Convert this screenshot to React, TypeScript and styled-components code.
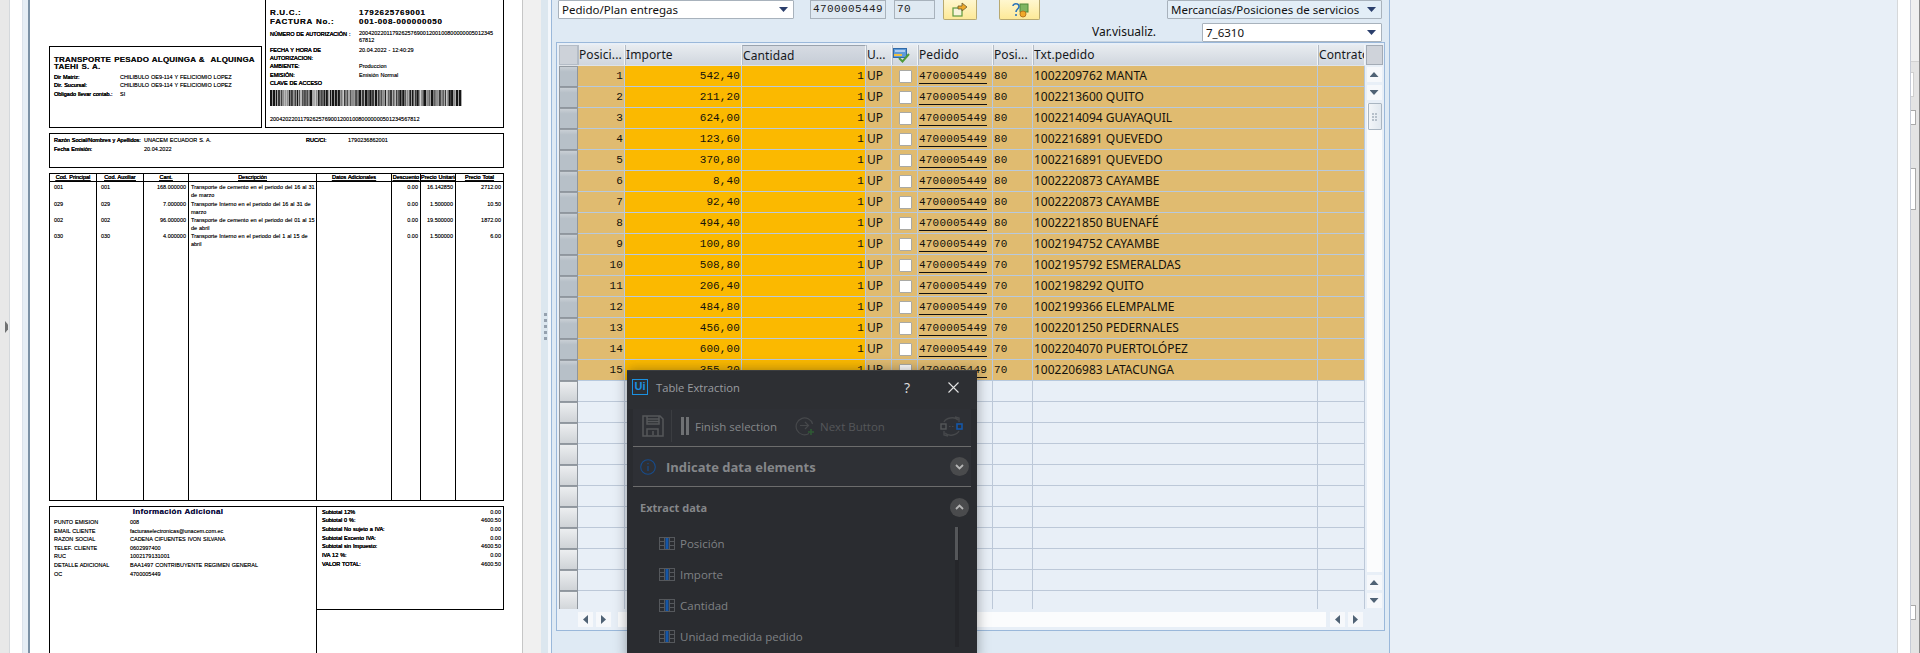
import React, { FC } from 'react';
import styled, { createGlobalStyle } from 'styled-components';

const GlobalStyle = createGlobalStyle`
  html, body { margin: 0; padding: 0; background: #fff; overflow: hidden; }
  * { box-sizing: border-box; }
`;

const Screen = styled.div`
  position: relative;
  display: flex;
  width: 1920px;
  height: 653px;
  overflow: hidden;
  font-family: 'Noto Sans', sans-serif;
`;

/* ---------- left viewer chrome ---------- */
const LeftRail = styled.div`
  width: 10px;
  background: #e8e8e8;
  border-right: 1px solid #d4d8dc;
  display: flex;
  align-items: center;
  justify-content: flex-end;
  padding: 0 1px 0 0;
`;
const RailGrip = styled.div`
  width: 3px;
  height: 12px;
  margin-top: 1px;
  background: #6f7172;
  clip-path: polygon(0 0, 100% 30%, 100% 70%, 0 100%);
`;
const ViewerGap = styled.div`
  width: 12px;
  background: #fff;
`;
const ViewerBand = styled.div`
  width: 8px;
  background: #e6eef5;
  border-left: 1px solid #dbe2ea;
  border-right: 2px solid #7c92a6;
`;

/* ---------- invoice ---------- */
const InvoicePage = styled.div`
  width: 493px;
  background: #fff;
  border-right: 1px solid #c6c6c6;
  padding: 0 18px 0 19px;
  color: #111;
  font-family: 'Liberation Sans', Arial, sans-serif;
  font-size: 5.5px;
  word-spacing: 0.4px;
  text-shadow: 0 0 0.6px rgba(0, 0, 0, 0.75);
  display: flex;
  flex-direction: column;

  & > * {
    flex: none;
  }
`;
const InvoiceTop = styled.div`
  display: flex;
  align-items: flex-end;
  gap: 3px;
  height: 128px;
`;
const InvoiceBox = styled.div`
  border: 1px solid #000;
`;
const CompanyBox = styled(InvoiceBox)`
  width: 213px;
  height: 82px;
  padding: 9px 5px 0 4px;
`;
const CompanyName = styled.div`
  font-size: 8px;
  line-height: 7px;
  font-weight: 700;
  letter-spacing: 0.2px;
  word-spacing: 0.6px;
  margin-bottom: 3px;
  white-space: pre;
`;
const PlainRow = styled.div<{ $h: number; $label: number }>`
  display: grid;
  grid-template-columns: ${(p) => p.$label}px 1fr;
  height: ${(p) => p.$h}px;
  line-height: 8px;
  white-space: nowrap;
`;
const KeyText = styled.span`
  text-shadow: 0 0 0.5px #000, 0 0 0.5px #000;
`;
const RucBox = styled(InvoiceBox)`
  width: 239px;
  height: 129px;
  padding: 8px 5px 0 4px;
`;
const RucRow = styled.div`
  display: grid;
  grid-template-columns: 89px 1fr;
  font-size: 8px;
  line-height: 9px;
  font-weight: 700;
  letter-spacing: 0.68px;
  height: 9px;
  white-space: nowrap;
`;
const RucDetails = styled.div`
  margin-top: 4px;
`;
const DetailValue = styled.span`
  line-height: 7.4px;
  white-space: normal;
  word-break: break-all;
  padding-right: 4px;
`;
const BarcodeArt = styled.svg`
  display: block;
  margin: 3px 0 0 0;
`;
const KeyLine = styled.div`
  margin-top: 9px;
  white-space: nowrap;
  line-height: 8px;
`;
const BuyerBox = styled(InvoiceBox)`
  margin-top: 5px;
  height: 35px;
  padding: 2px 0 0 4px;
`;
const BuyerLine = styled.div`
  display: grid;
  grid-template-columns: 90px 162px 42px 1fr;
  height: 9px;
  line-height: 8px;
  white-space: nowrap;
`;
const ItemsTable = styled(InvoiceBox)`
  margin-top: 5px;
  height: 328px;
  display: flex;
`;
const ItemColumn = styled.div<{ $w: number; $last?: boolean }>`
  width: ${(p) => p.$w}px;
  flex: none;
  border-right: ${(p) => (p.$last ? 0 : '1px solid #000')};
`;
const ItemHead = styled.div`
  height: 8px;
  border-bottom: 1px solid #000;
  text-align: center;
  text-decoration: underline;
  text-shadow: 0 0 0.5px #000, 0 0 0.5px #000;
  line-height: 7px;
  white-space: nowrap;
  overflow: hidden;
`;
const ItemCell = styled.div<{ $h: number; $align?: string; $wide?: boolean }>`
  height: ${(p) => p.$h}px;
  line-height: 7.6px;
  padding: ${(p) => (p.$wide ? '0 0 0 2px' : p.$align === 'right' ? '0 2px' : '0 2px 0 4px')};
  text-align: ${(p) => p.$align || 'left'};
`;
const ItemCells = styled.div`
  padding-top: 2px;
`;
const FooterRow = styled.div`
  margin-top: 5px;
  display: flex;
  align-items: flex-start;
`;
const ExtraBox = styled(InvoiceBox)`
  width: 268px;
  height: 160px;
  flex: none;
  padding: 0 0 0 4px;
`;
const ExtraTitle = styled.div`
  font-size: 8px;
  line-height: 9px;
  font-weight: 700;
  text-align: center;
  letter-spacing: 0.3px;
  color: #10104a;
  padding-right: 14px;
`;
const ExtraRows = styled.div`
  margin-top: 2px;
`;
const TotalsBox = styled.div`
  flex: 1;
  height: 104px;
  border: 1px solid #000;
  border-left: 0;
  padding: 1px 2px 0 5px;
`;
const TotalLine = styled.div<{ $h: number }>`
  display: flex;
  justify-content: space-between;
  height: ${(p) => p.$h}px;
  line-height: 8px;
`;

/* ---------- sash between the panes ---------- */
const SashGap = styled.div`
  width: 18px;
  background: #f0f0f0;
`;
const Sash = styled.div`
  width: 7px;
  background: #dce7ef;
  display: flex;
  flex-direction: column;
  align-items: center;
  justify-content: center;
  gap: 3px;
  padding: 0 0 0 2px;
`;
const SashDot = styled.i`
  display: block;
  width: 3px;
  height: 3px;
  background: #95a1ae;
`;
const SashEdge = styled.div`
  width: 3px;
  background: #f3f7fb;
`;

/* ---------- SAP panel ---------- */
const SapPanel = styled.div`
  width: 839px;
  background: #dfeaf4;
  border-left: 1px solid #9ab8da;
  border-right: 1px solid #9ab8da;
  display: flex;
  flex-direction: column;
`;
const FormRow = styled.div`
  display: flex;
  height: 20px;
  padding-left: 6px;
  align-items: flex-start;
`;
const FormRowTwo = styled.div`
  display: flex;
  height: 22px;
  padding-top: 3px;
  padding-left: 538px;
  font-size: 12px;
  color: #111;
`;
const FieldLabel = styled.div`
  width: 112px;
  height: 19px;
  line-height: 18px;
  padding-left: 2px;
  border-bottom: 1px solid #c5d3e1;
`;
const Dropdown = styled.div<{ $w: number; $ml?: number; $dim?: boolean }>`
  width: ${(p) => p.$w}px;
  height: 19px;
  margin-left: ${(p) => p.$ml || 0}px;
  background: ${(p) => (p.$dim ? '#e3eef7' : '#fff')};
  border: 1px solid #a8b2bc;
  border-radius: 1px;
  font-size: 11.5px;
  line-height: 17px;
  color: #111;
  padding: 0 3px;
  display: flex;
  justify-content: space-between;
  align-items: center;
  white-space: nowrap;
`;
const DropArrow = styled.span`
  width: 9px;
  height: 5px;
  margin-right: 2px;
  background: #2b3f6c;
  clip-path: polygon(0 0, 100% 0, 50% 100%);
`;
const ReadField = styled.div<{ $w: number; $ml: number }>`
  width: ${(p) => p.$w}px;
  height: 19px;
  margin-left: ${(p) => p.$ml}px;
  background: #dfe9f2;
  border: 1px solid #a8b2bc;
  font-family: 'Liberation Mono', monospace;
  font-size: 11px;
  letter-spacing: 0.4px;
  line-height: 17px;
  color: #222;
  padding-left: 2px;
  white-space: nowrap;
  overflow: hidden;
`;
const ToolButton = styled.div<{ $w: number; $ml: number }>`
  width: ${(p) => p.$w}px;
  height: 20px;
  margin-left: ${(p) => p.$ml}px;
  border: 1px solid #b8a970;
  border-top: 0;
  border-radius: 0 0 2px 2px;
  background: linear-gradient(#fff7cf, #fde998);
  display: flex;
  align-items: center;
  justify-content: center;
`;
const TableFrame = styled.div`
  margin: 0 0 0 4px;
  width: 829px;
  height: 589px;
  border: 1px solid #9ab8da;
  background: #e8eff7;
  padding: 2px 0 0 2px;
`;
const TableArea = styled.div`
  display: flex;
  height: 564px;
`;
const GridArea = styled.div`
  width: 806px;
  overflow: hidden;
`;
const COLUMNS = '19px 47px 117px 124px 26px 26px 75px 40px 285px 47px';
const HeaderRow = styled.div`
  display: grid;
  grid-template-columns: ${COLUMNS};
  height: 21px;
  padding-bottom: 1px;
  background: #dfe3e8;
`;
const HeadCell = styled.div<{ $sorted?: boolean }>`
  background: ${(p) =>
    p.$sorted
      ? 'linear-gradient(#d6dbe2, #c6cdd7)'
      : 'linear-gradient(#e8ecf0, #d0d6de)'};
  border-right: 1px solid #f2f5f8;
  border-left: 1px solid #b4bcc6;
  border-top: ${(p) => (p.$sorted ? '1px solid #9aa3ad' : '0')};
  font-size: 12px;
  letter-spacing: 0.1px;
  line-height: 20px;
  color: #15181c;
  white-space: nowrap;
  overflow: hidden;
  display: flex;
  align-items: center;
`;
const CornerCell = styled.div`
  background: #cdd2d9;
  border: 1px solid #b4bcc6;
`;
const BodyRow = styled.div`
  display: grid;
  grid-template-columns: ${COLUMNS};
  height: 21px;
`;
const RowSelector = styled.div<{ $filled?: boolean }>`
  border: 1px solid #8f969e;
  border-top: 1px solid #949ba2;
  background: ${(p) =>
    p.$filled
      ? 'linear-gradient(#c9cfd5 0, #b7c0c8 25%, #b7c0c8 100%)'
      : 'linear-gradient(#eceef0, #cfd3d7)'};
`;
const DataCell = styled.div<{ $tone: 'tan' | 'gold' | 'empty'; $mono?: boolean; $right?: boolean }>`
  background: ${(p) =>
    p.$tone === 'tan' ? '#e0bb70' : p.$tone === 'gold' ? '#fbb900' : '#e8eff7'};
  border-right: 1px solid ${(p) => (p.$tone === 'empty' ? '#bcc8d8' : '#b7c9de')};
  border-bottom: 1px solid ${(p) => (p.$tone === 'empty' ? '#bcc8d8' : '#b7c9de')};
  font-family: ${(p) => (p.$mono ? "'Liberation Mono', monospace" : "'Noto Sans', sans-serif")};
  font-size: ${(p) => (p.$mono ? '11px' : '12px')};
  letter-spacing: ${(p) => (p.$mono ? '0.12px' : '0')};
  line-height: 20px;
  color: #14120c;
  text-align: ${(p) => (p.$right ? 'right' : 'left')};
  padding: ${(p) => (p.$right ? '0 1px 0 0' : '0 0 0 1px')};
  white-space: nowrap;
  overflow: hidden;
  display: block;
`;
const CheckCell = styled(DataCell)`
  display: flex;
  align-items: center;
  justify-content: center;
`;
const CheckBox = styled.div`
  width: 13px;
  height: 13px;
  background: #fff;
  border: 1px solid #a9a9a4;
  border-radius: 1px;
`;
const OrderLink = styled.span`
  border-bottom: 1px solid #111;
  padding-bottom: 1px;
  letter-spacing: 0.2px;
`;
const VScroll = styled.div`
  width: 18px;
  display: flex;
  flex-direction: column;
  align-items: center;
  padding-bottom: 1px;
`;
const ScrollCorner = styled.div`
  width: 17px;
  height: 20px;
  background: #cfd3da;
  border: 1px solid #a3abb5;
  margin: 0 0 2px 0;
`;
const ScrollButton = styled.div<{ $mt?: number }>`
  width: 15px;
  height: 15px;
  margin-top: ${(p) => p.$mt || 0}px;
  background: #f6f8fb;
  display: flex;
  align-items: center;
  justify-content: center;
  flex: none;
`;
const ScrollTriangle = styled.i<{ $dir: 'up' | 'down' | 'left' | 'right' }>`
  display: block;
  width: ${(p) => (p.$dir === 'up' || p.$dir === 'down' ? 9 : 5)}px;
  height: ${(p) => (p.$dir === 'up' || p.$dir === 'down' ? 5 : 9)}px;
  background: #4f6275;
  clip-path: ${(p) =>
    p.$dir === 'up'
      ? 'polygon(50% 0, 100% 100%, 0 100%)'
      : p.$dir === 'down'
      ? 'polygon(0 0, 100% 0, 50% 100%)'
      : p.$dir === 'left'
      ? 'polygon(100% 0, 100% 100%, 0 50%)'
      : 'polygon(0 0, 100% 50%, 0 100%)'};
`;
const ScrollTrack = styled.div`
  flex: 1;
  width: 15px;
  margin-top: 3px;
  background: #fbfcfd;
  display: flex;
  flex-direction: column;
`;
const ScrollThumb = styled.div`
  width: 14px;
  height: 27px;
  margin-left: 1px;
  background: linear-gradient(90deg, #f2f5f8, #e1e8ef);
  border: 1px solid #a9b5c1;
  border-radius: 1px;
  display: grid;
  grid-template-columns: repeat(2, 2px);
  grid-auto-rows: 2px;
  gap: 1px;
  justify-content: center;
  align-content: center;
`;
const ThumbDot = styled.i`
  display: block;
  background: #b6c0ca;
`;
const HScroll = styled.div`
  margin: 3px 0 0 19px;
  height: 15px;
  width: 785px;
  display: flex;
  gap: 3px;
`;
const HTrack = styled.div`
  flex: 1;
  background: #fbfcfd;
  margin-left: 4px;
  margin-right: 1px;
`;

/* ---------- right side ---------- */
const EmptyPane = styled.div`
  flex: 1;
  background: #e8eff7;
  border-right: 1px solid #d6d8da;
`;
const WhiteStrip = styled.div`
  width: 12px;
  background: #fff;
  border-right: 1px solid #c6cbd6;
  box-sizing: content-box;
`;
const DockBar = styled.div`
  width: 9px;
  background: #e4e4e4;
  border-right: 1px solid #8a8a8a;
  display: flex;
  flex-direction: column;
  align-items: flex-start;
`;
const DockHead = styled.div`
  height: 62px;
  width: 8px;
  flex: none;
  background: #f0f0f0;
  border-bottom: 1px solid #d2d2d2;
`;
const DockTab = styled.div<{ $w: number; $h: number; $mt: number; $soft?: boolean }>`
  width: ${(p) => p.$w}px;
  height: ${(p) => p.$h}px;
  margin-top: ${(p) => p.$mt}px;
  background: #fff;
  border: 1px solid ${(p) => (p.$soft ? '#cfcfcf' : '#a9a9a9')};
  border-left: 0;
  flex: none;
`;

/* ---------- UiPath popup ---------- */
const Popup = styled.div`
  position: absolute;
  left: 627px;
  top: 370px;
  width: 350px;
  height: 290px;
  background: #2a2c30;
  border-top: 1px solid #3b3d40;
  box-shadow: 0 0 12px rgba(30, 30, 30, 0.4);
  color: #929497;
  font-family: 'Open Sans', 'Noto Sans', sans-serif;
  font-size: 11.5px;
`;
const PopupTitleBar = styled.div`
  height: 38px;
  display: flex;
  align-items: center;
  padding: 0 0 6px 5px;
  background: #2d2f33;
`;
const UiLogo = styled.div`
  width: 16px;
  height: 16px;
  border: 1.5px solid #1b90e0;
  color: #1b90e0;
  font-family: 'Liberation Sans', sans-serif;
  font-size: 11px;
  font-weight: 700;
  line-height: 13px;
  text-align: center;
  margin-right: 8px;
`;
const PopupTitle = styled.div`
  flex: 1;
  font-size: 11.2px;
  color: #9a9ca0;
`;
const PopupHelp = styled.div`
  width: 44px;
  font-size: 14px;
  color: #e0e0e0;
`;
const PopupClose = styled.div`
  width: 29px;
  display: flex;
`;
const PopupToolbar = styled.div`
  margin: 0 6px;
  height: 38px;
  background: #2e3035;
  border-bottom: 1px solid #6c6c6c;
  display: flex;
  align-items: center;
  padding: 0 0 3px 9px;
`;
const ToolDivider = styled.div`
  width: 1px;
  height: 32px;
  margin: 0 9px 0 7px;
  background: #3b3d41;
`;
const PauseBars = styled.div`
  display: flex;
  gap: 2px;
  margin-right: 6px;
`;
const PauseBar = styled.i`
  display: block;
  width: 3px;
  height: 18px;
  background: #6f7174;
`;
const FinishLabel = styled.div`
  color: #85878a;
  width: 100px;
  white-space: nowrap;
`;
const NextLabel = styled.div`
  color: #55575a;
  margin-left: 5px;
  flex: 1;
  white-space: nowrap;
`;
const SwapSlot = styled.div`
  margin-right: 8px;
  display: flex;
`;
const PopupSection = styled.div`
  margin: 0 6px;
  height: 40px;
  border-bottom: 1px solid #6c6c6c;
  display: flex;
  align-items: center;
  padding: 0 2px 0 7px;
  background: #2e3035;
`;
const SectionTitle = styled.div`
  flex: 1;
  margin-left: 10px;
  font-size: 13px;
  font-weight: 700;
  color: #85878a;
`;
const ChevronBall = styled.div`
  width: 19px;
  height: 19px;
  border-radius: 50%;
  background: #4a4b4d;
  display: flex;
  align-items: center;
  justify-content: center;
`;
const ExtractRow = styled.div`
  height: 40px;
  margin: 0 8px 0 13px;
  display: flex;
  align-items: center;
  justify-content: space-between;
  font-size: 11px;
  font-weight: 700;
  color: #85878a;
`;
const ExtractBody = styled.div`
  position: relative;
  padding: 1px 0 0 32px;
`;
const ExtractItem = styled.div`
  height: 31px;
  display: flex;
  align-items: center;
  gap: 5px;
  color: #7f8184;
`;
const ListScrollTrack = styled.div`
  position: absolute;
  right: 18px;
  top: 0;
  width: 4px;
  height: 120px;
  background: #25262a;
`;
const ListScrollThumb = styled.div`
  width: 3px;
  height: 33px;
  background: #55575a;
`;

/* ---------- small drawings ---------- */
const Chevron: FC<{ up?: boolean }> = ({ up }) => (
  <svg width="9" height="6" viewBox="0 0 9 6">
    <path
      d={up ? 'M1 5 L4.5 1.5 L8 5' : 'M1 1 L4.5 4.5 L8 1'}
      fill="none"
      stroke="#b5b5b5"
      strokeWidth="1.8"
    />
  </svg>
);

const ColumnIcon: FC = () => (
  <svg width="16" height="13" viewBox="0 0 16 13" fill="none">
    <rect x="0.5" y="0.5" width="15" height="12" stroke="#55585c" />
    <path d="M0 4.5H6M0 8.5H6M10 4.5H16M10 8.5H16M5.5 0V13M10.5 0V13" stroke="#55585c" />
    <rect x="6.5" y="1" width="3" height="11" fill="#1557a8" />
  </svg>
);

const SaveIcon: FC = () => (
  <svg width="22" height="22" viewBox="0 0 22 22" fill="none" stroke="#55575a" strokeWidth="1.5">
    <path d="M1 1H18L21 4V21H1Z" />
    <path d="M5 1V9H17V1M5 4H17M5 6.5H17" />
    <path d="M5 21V14H16V21M11 16V20" />
  </svg>
);

const NextIcon: FC = () => (
  <svg width="20" height="20" viewBox="0 0 20 20" fill="none" stroke="#46484b" strokeWidth="1.2">
    <path d="M14 17.5A8.4 8.4 0 1 1 17.6 8" />
    <path d="M5 9.5H13M10 6L13.5 9.5L10 13" />
    <path d="M16 13V19M13 16H19" stroke="#2f5a35" strokeWidth="1.6" />
  </svg>
);

const SwapIcon: FC = () => (
  <svg width="23" height="21" viewBox="0 0 23 21" fill="none">
    <path d="M4 6C6 2 14 0 18 4M15 1L19 2V6" stroke="#46484b" strokeWidth="1.4" />
    <path d="M19 15C17 19 9 21 5 17M8 20L4 19V15" stroke="#46484b" strokeWidth="1.4" />
    <rect x="1" y="8" width="5" height="5" stroke="#55575a" strokeWidth="1.4" />
    <rect x="17" y="8" width="5" height="5" stroke="#1557a8" strokeWidth="1.6" />
    <path d="M9 10.5H14" stroke="#46484b" strokeDasharray="1.5 1.5" />
  </svg>
);

const InfoIcon: FC = () => (
  <svg width="16" height="16" viewBox="0 0 16 16" fill="none" stroke="#174c8c">
    <circle cx="8" cy="8" r="7.3" strokeWidth="1.1" />
    <path d="M8 7V12" strokeWidth="1.2" />
    <path d="M8 4V5.3" strokeWidth="1.2" />
  </svg>
);

const CloseIcon: FC = () => (
  <svg width="11" height="11" viewBox="0 0 11 11">
    <path d="M0.5 0.5L10.5 10.5M10.5 0.5L0.5 10.5" stroke="#e4e4e4" strokeWidth="1.1" />
  </svg>
);

const ExportIcon: FC = () => (
  <svg width="16" height="15" viewBox="0 0 16 15" fill="none">
    <rect x="1" y="6" width="9" height="8" fill="#f7f3dc" stroke="#5f9a3d" strokeWidth="1.2" />
    <path d="M6 4H10V1L15 5L10 9V7H6Z" fill="#f0a92a" stroke="#6b5a2e" strokeWidth="0.8" />
  </svg>
);

const HelpIcon: FC = () => (
  <svg width="18" height="16" viewBox="0 0 18 16" fill="none">
    <rect x="9" y="2" width="8" height="8" fill="#7fb561" stroke="#4f8a3a" />
    <circle cx="12" cy="12" r="3" fill="#f0a92a" stroke="#b9781c" />
    <path d="M2 4C2 1 8 1 8 4.5C8 7 5 7 5 10M5 12V14" stroke="#2d74b8" strokeWidth="1.6" />
  </svg>
);

const ColumnCheckIcon: FC = () => (
  <svg width="17" height="15" viewBox="0 0 17 15" fill="none">
    <rect x="0.5" y="0.5" width="13" height="9" fill="#5f9bd8" stroke="#2f69a8" />
    <path d="M2 3H12" stroke="#e4efff" strokeWidth="1.2" />
    <path d="M1 7H9" stroke="#f0c040" strokeWidth="2" />
    <path d="M6 10L9.5 13.5L16 6" stroke="#4f9a3a" strokeWidth="2" />
  </svg>
);

const BARCODE = Array.from({ length: 118 }, (_, i) => {
  const v = (i * 7919 + (i * i) % 97) % 11;
  return { w: v % 3 === 0 ? 2.4 : 1.2, shade: v > 7 ? '#8c8c8c' : v > 3 ? '#3a3a3a' : '#151515', gap: v % 2 === 0 ? 0.5 : 0.2 };
});

const Barcode: FC = () => {
  let x = 0;
  return (
    <BarcodeArt width="192" height="16" viewBox="0 0 192 16">
      {BARCODE.map((b, i) => {
        const rect = <rect key={i} x={x} y="0" width={b.w} height="16" fill={b.shade} />;
        x += (b.w + b.gap) * 1.02;
        return rect;
      })}
    </BarcodeArt>
  );
};

/* ---------- data ---------- */
const ITEM_COLUMNS = [
  { w: 47, head: 'Cod. Principal', cells: ['001', '029', '002', '030'] },
  { w: 47, head: 'Cod. Auxiliar', cells: ['001', '029', '002', '030'] },
  { w: 45, head: 'Cant.', right: true, cells: ['168.000000', '7.000000', '96.000000', '4.000000'] },
  {
    w: 128,
    head: 'Descripción',
    wide: true,
    cells: [
      'Transporte de cemento en el periodo del 16 al 31 de marzo',
      'Transporte Interno en el periodo del 16 al 31 de marzo',
      'Transporte de cemento en el periodo del 01 al 15 de abril',
      'Transporte Interno en el periodo del 1 al 15 de abril',
    ],
  },
  { w: 75, head: 'Datos Adicionales', cells: ['', '', '', ''] },
  { w: 29, head: 'Descuento', right: true, cells: ['0.00', '0.00', '0.00', '0.00'] },
  { w: 35, head: 'Precio Unitario', right: true, cells: ['16.142850', '1.500000', '19.500000', '1.500000'] },
  { w: 47, head: 'Precio Total', right: true, last: true, cells: ['2712.00', '10.50', '1872.00', '6.00'] },
];
const ITEM_HEIGHTS = [17, 16, 16, 16];

const EXTRA_ROWS = [
  ['PUNTO EMISION', '008'],
  ['EMAIL CLIENTE', 'facturaselectronicas@unacem.com.ec'],
  ['RAZON SOCIAL', 'CADENA CIFUENTES IVON SILVANA'],
  ['TELEF. CLIENTE', '0602997400'],
  ['RUC', '1002179131001'],
  ['DETALLE ADICIONAL', 'BAA1497 CONTRIBUYENTE REGIMEN GENERAL'],
  ['OC', '4700005449'],
];
const TOTALS = [
  ['Subtotal 12%', '0.00', 8],
  ['Subtotal 0 %:', '4600.50', 9],
  ['Subtotal No sujeto a IVA:', '0.00', 9],
  ['Subtotal Excento IVA:', '0.00', 8],
  ['Subtotal sin Impuesto:', '4600.50', 9],
  ['IVA 12 %:', '0.00', 9],
  ['VALOR TOTAL:', '4600.50', 9],
] as const;

const ROWS = [
  ['542,40', '80', '1002209762 MANTA'],
  ['211,20', '80', '1002213600 QUITO'],
  ['624,00', '80', '1002214094 GUAYAQUIL'],
  ['123,60', '80', '1002216891 QUEVEDO'],
  ['370,80', '80', '1002216891 QUEVEDO'],
  ['8,40', '80', '1002220873 CAYAMBE'],
  ['92,40', '80', '1002220873 CAYAMBE'],
  ['494,40', '80', '1002221850 BUENAFÉ'],
  ['100,80', '70', '1002194752 CAYAMBE'],
  ['508,80', '70', '1002195792 ESMERALDAS'],
  ['206,40', '70', '1002198292 QUITO'],
  ['484,80', '70', '1002199366 ELEMPALME'],
  ['456,00', '70', '1002201250 PEDERNALES'],
  ['600,00', '70', '1002204070 PUERTOLÓPEZ'],
  ['355,20', '70', '1002206983 LATACUNGA'],
];

const EMPTY_ROWS = Array.from({ length: 11 }, (_, i) => i);
const EMPTY_CELLS = Array.from({ length: 9 }, (_, i) => i);
const LIST_ITEMS = ['Posición', 'Importe', 'Cantidad', 'Unidad medida pedido'];

const Invoice: FC = () => (
  <InvoicePage>
    <InvoiceTop>
      <CompanyBox>
        <CompanyName>{'TRANSPORTE PESADO ALQUINGA &  ALQUINGA\nTAEHI S. A.'}</CompanyName>
        <PlainRow $h={8} $label={66}>
          <KeyText>Dir Matriz:</KeyText>
          <span>CHILIBULO OE9-114 Y FELICIOMIO LOPEZ</span>
        </PlainRow>
        <PlainRow $h={9} $label={66}>
          <KeyText>Dir. Sucursal:</KeyText>
          <span>CHILIBULO OE9-114 Y FELICIOMIO LOPEZ</span>
        </PlainRow>
        <PlainRow $h={9} $label={66}>
          <KeyText>Obligado llevar contab.:</KeyText>
          <span>SI</span>
        </PlainRow>
      </CompanyBox>
      <RucBox>
        <RucRow>
          <span>R.U.C.:</span>
          <span>1792625769001</span>
        </RucRow>
        <RucRow>
          <span>FACTURA No.:</span>
          <span>001-008-000000050</span>
        </RucRow>
        <RucDetails>
          <PlainRow $h={16} $label={89}>
            <KeyText>NÚMERO DE AUTORIZACIÓN :</KeyText>
            <DetailValue>2004202201179262576900120010080000000501234567812</DetailValue>
          </PlainRow>
          <PlainRow $h={16} $label={89}>
            <KeyText>
              FECHA Y HORA DE
              <br />
              AUTORIZACION:
            </KeyText>
            <span>20.04.2022 - 12:40:29</span>
          </PlainRow>
          <PlainRow $h={9} $label={89}>
            <KeyText>AMBIENTE:</KeyText>
            <span>Produccion</span>
          </PlainRow>
          <PlainRow $h={8} $label={89}>
            <KeyText>EMISIÓN:</KeyText>
            <span>Emisión Normal</span>
          </PlainRow>
          <PlainRow $h={8} $label={89}>
            <KeyText>CLAVE DE ACCESO</KeyText>
            <span />
          </PlainRow>
        </RucDetails>
        <Barcode />
        <KeyLine>2004202201179262576900120010080000000501234567812</KeyLine>
      </RucBox>
    </InvoiceTop>
    <BuyerBox>
      <BuyerLine>
        <KeyText>Razón Social/Nombres y Apellidos:</KeyText>
        <span>UNACEM ECUADOR S. A.</span>
        <KeyText>RUC/CI:</KeyText>
        <span>1790236862001</span>
      </BuyerLine>
      <BuyerLine>
        <KeyText>Fecha Emisión:</KeyText>
        <span>20.04.2022</span>
      </BuyerLine>
    </BuyerBox>
    <ItemsTable>
      {ITEM_COLUMNS.map((col) => (
        <ItemColumn key={col.head} $w={col.w} $last={col.last}>
          <ItemHead>{col.head}</ItemHead>
          <ItemCells>
            {col.cells.map((c, i) => (
              <ItemCell
                key={i}
                $h={ITEM_HEIGHTS[i]}
                $wide={col.wide}
                $align={col.right ? 'right' : 'left'}
              >
                {c}
              </ItemCell>
            ))}
          </ItemCells>
        </ItemColumn>
      ))}
    </ItemsTable>
    <FooterRow>
      <ExtraBox>
        <ExtraTitle>Información Adicional</ExtraTitle>
        <ExtraRows>
          {EXTRA_ROWS.map(([k, v]) => (
            <PlainRow key={k} $h={8.6} $label={76}>
              <span>{k}</span>
              <span>{v}</span>
            </PlainRow>
          ))}
        </ExtraRows>
      </ExtraBox>
      <TotalsBox>
        {TOTALS.map(([k, v, h]) => (
          <TotalLine key={k} $h={h}>
            <KeyText>{k}</KeyText>
            <span>{v}</span>
          </TotalLine>
        ))}
      </TotalsBox>
    </FooterRow>
  </InvoicePage>
);

const OrderTable: FC = () => (
  <TableFrame>
    <TableArea>
      <GridArea>
        <HeaderRow>
          <CornerCell />
          <HeadCell>Posici...</HeadCell>
          <HeadCell>Importe</HeadCell>
          <HeadCell $sorted>Cantidad</HeadCell>
          <HeadCell>U...</HeadCell>
          <HeadCell>
            <ColumnCheckIcon />
          </HeadCell>
          <HeadCell>Pedido</HeadCell>
          <HeadCell>Posi...</HeadCell>
          <HeadCell>Txt.pedido</HeadCell>
          <HeadCell>Contrato</HeadCell>
        </HeaderRow>
        {ROWS.map(([amount, pos, text], i) => (
          <BodyRow key={i}>
            <RowSelector $filled />
            <DataCell $tone="tan" $mono $right>
              {i + 1}
            </DataCell>
            <DataCell $tone="gold" $mono $right>
              {amount}
            </DataCell>
            <DataCell $tone="gold" $mono $right>
              1
            </DataCell>
            <DataCell $tone="tan">UP</DataCell>
            <CheckCell $tone="tan">
              <CheckBox />
            </CheckCell>
            <DataCell $tone="tan" $mono>
              <OrderLink>4700005449</OrderLink>
            </DataCell>
            <DataCell $tone="tan" $mono>
              {pos}
            </DataCell>
            <DataCell $tone="tan">{text}</DataCell>
            <DataCell $tone="tan" />
          </BodyRow>
        ))}
        {EMPTY_ROWS.map((r) => (
          <BodyRow key={r}>
            <RowSelector />
            {EMPTY_CELLS.map((c) => (
              <DataCell key={c} $tone="empty" />
            ))}
          </BodyRow>
        ))}
      </GridArea>
      <VScroll>
        <ScrollCorner />
        <ScrollButton>
          <ScrollTriangle $dir="up" />
        </ScrollButton>
        <ScrollButton $mt={3}>
          <ScrollTriangle $dir="down" />
        </ScrollButton>
        <ScrollTrack>
          <ScrollThumb>
            {[0, 1, 2, 3, 4, 5].map((d) => (
              <ThumbDot key={d} />
            ))}
          </ScrollThumb>
        </ScrollTrack>
        <ScrollButton $mt={3}>
          <ScrollTriangle $dir="up" />
        </ScrollButton>
        <ScrollButton $mt={3}>
          <ScrollTriangle $dir="down" />
        </ScrollButton>
      </VScroll>
    </TableArea>
    <HScroll>
      <ScrollButton>
        <ScrollTriangle $dir="left" />
      </ScrollButton>
      <ScrollButton>
        <ScrollTriangle $dir="right" />
      </ScrollButton>
      <HTrack />
      <ScrollButton>
        <ScrollTriangle $dir="left" />
      </ScrollButton>
      <ScrollButton>
        <ScrollTriangle $dir="right" />
      </ScrollButton>
    </HScroll>
  </TableFrame>
);

const ExtractionPopup: FC = () => (
  <Popup>
    <PopupTitleBar>
      <UiLogo>Ui</UiLogo>
      <PopupTitle>Table Extraction</PopupTitle>
      <PopupHelp>?</PopupHelp>
      <PopupClose>
        <CloseIcon />
      </PopupClose>
    </PopupTitleBar>
    <PopupToolbar>
      <SaveIcon />
      <ToolDivider />
      <PauseBars>
        <PauseBar />
        <PauseBar />
      </PauseBars>
      <FinishLabel>Finish selection</FinishLabel>
      <NextIcon />
      <NextLabel>Next Button</NextLabel>
      <SwapSlot>
        <SwapIcon />
      </SwapSlot>
    </PopupToolbar>
    <PopupSection>
      <InfoIcon />
      <SectionTitle>Indicate data elements</SectionTitle>
      <ChevronBall>
        <Chevron />
      </ChevronBall>
    </PopupSection>
    <ExtractRow>
      <span>Extract data</span>
      <ChevronBall>
        <Chevron up />
      </ChevronBall>
    </ExtractRow>
    <ExtractBody>
      <ListScrollTrack>
        <ListScrollThumb />
      </ListScrollTrack>
      {LIST_ITEMS.map((item) => (
        <ExtractItem key={item}>
          <ColumnIcon />
          {item}
        </ExtractItem>
      ))}
    </ExtractBody>
  </Popup>
);

const App: FC = function App() {
  return (
    <>
      <GlobalStyle />
      <Screen>
        <LeftRail>
          <RailGrip />
        </LeftRail>
        <ViewerGap />
        <ViewerBand />
        <Invoice />
        <SashGap />
        <Sash>
          {[0, 1, 2, 3, 4].map((d) => (
            <SashDot key={d} />
          ))}
        </Sash>
        <SashEdge />
        <SapPanel>
          <FormRow>
            <Dropdown $w={236}>
              Pedido/Plan entregas
              <DropArrow />
            </Dropdown>
            <ReadField $w={76} $ml={16}>
              4700005449
            </ReadField>
            <ReadField $w={41} $ml={8}>
              70
            </ReadField>
            <ToolButton $w={34} $ml={8}>
              <ExportIcon />
            </ToolButton>
            <ToolButton $w={41} $ml={22}>
              <HelpIcon />
            </ToolButton>
            <Dropdown $w={215} $ml={127} $dim>
              Mercancías/Posiciones de servicios
              <DropArrow />
            </Dropdown>
          </FormRow>
          <FormRowTwo>
            <FieldLabel>Var.visualiz.</FieldLabel>
            <Dropdown $w={180}>
              7_6310
              <DropArrow />
            </Dropdown>
          </FormRowTwo>
          <OrderTable />
        </SapPanel>
        <EmptyPane />
        <WhiteStrip />
        <DockBar>
          <DockHead />
          <DockTab $w={3} $h={25} $mt={10} $soft />
          <DockTab $w={5} $h={15} $mt={13} />
          <DockTab $w={5} $h={42} $mt={43} />
          <DockTab $w={5} $h={15} $mt={395} />
        </DockBar>
        <ExtractionPopup />
      </Screen>
    </>
  );
};

export default App;
